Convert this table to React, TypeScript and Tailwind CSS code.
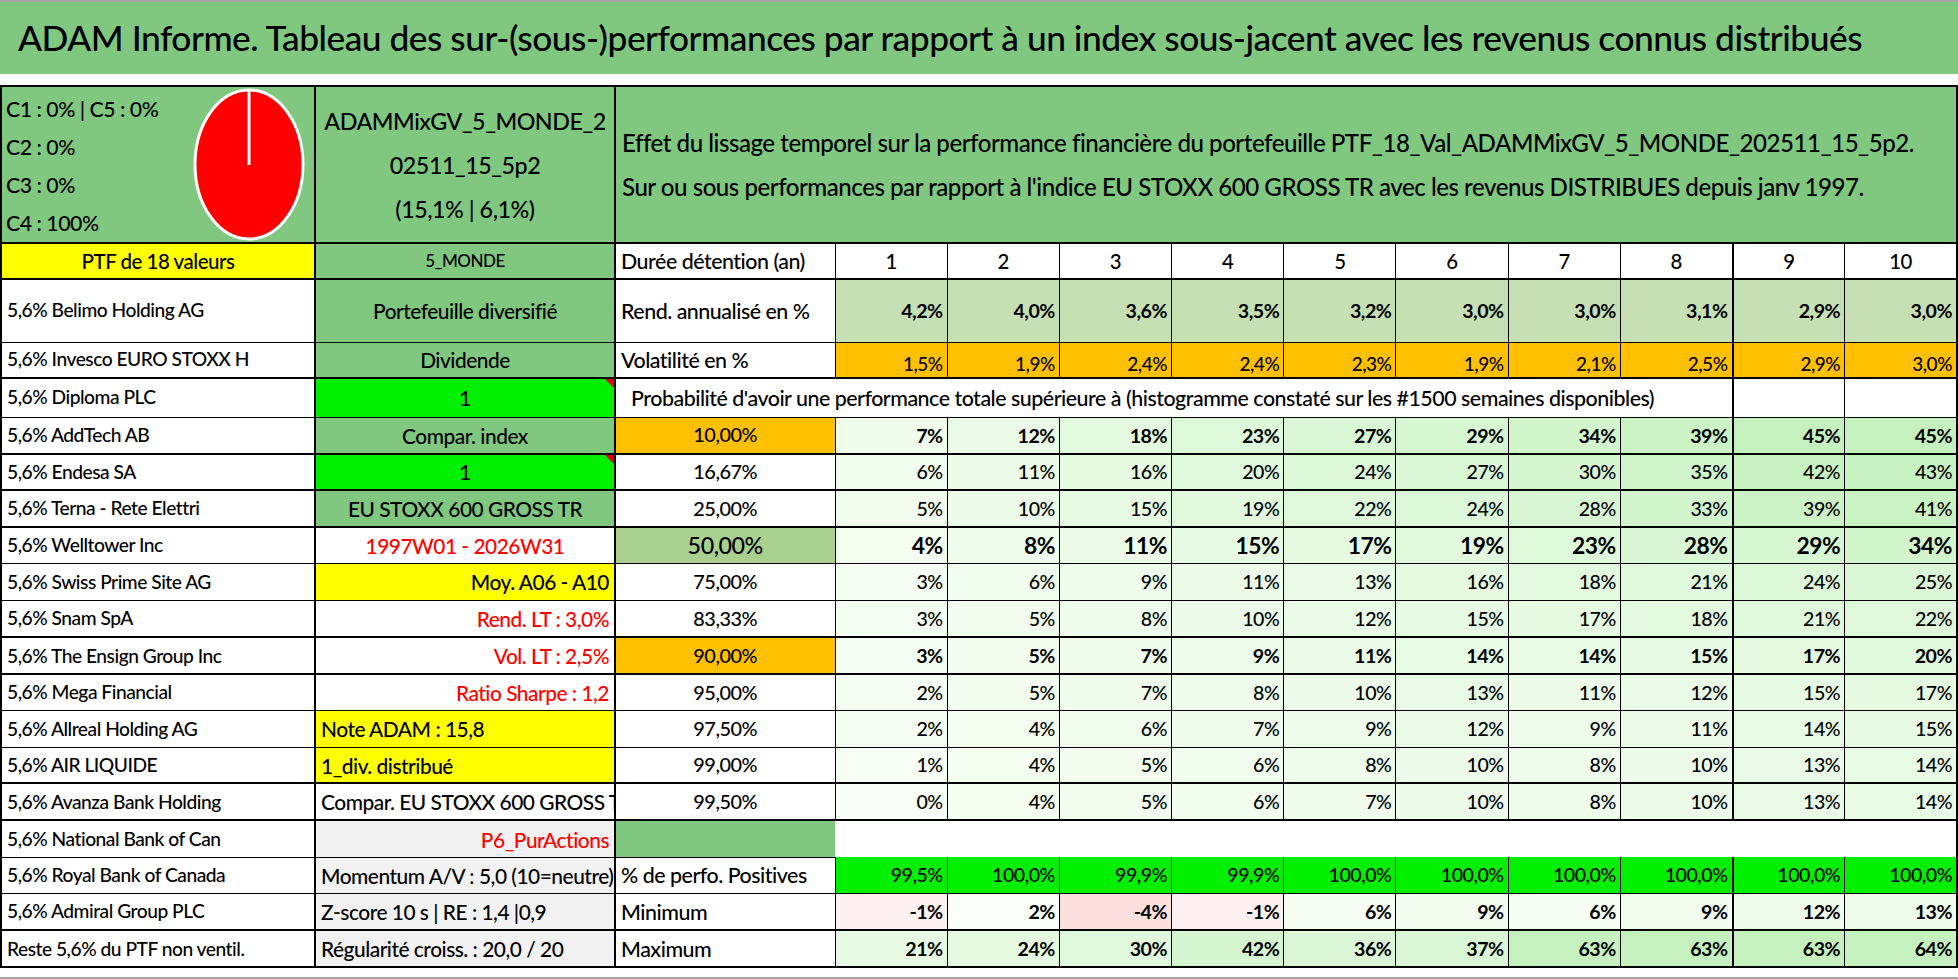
import React from 'react';

type Rgb = [number, number, number];

const mix = (a: Rgb, b: Rgb, t: number) => {
  const k = Math.max(0, Math.min(1, t));
  return `rgb(${a.map((v, i) => Math.round(v + (b[i] - v) * k)).join(',')})`;
};

const PALE: Rgb = [248, 255, 246];
const GREEN: Rgb = [196, 241, 189];
const probBg = (v: number) => mix(PALE, GREEN, v / 46);
const maxBg = (v: number) => mix(PALE, GREEN, v / 64);
const minBg = (v: number) => (v < 0 ? mix([253, 246, 246], [252, 224, 224], -v / 4) : mix([252, 255, 251], [238, 252, 235], v / 13));

const years = [1, 2, 3, 4, 5, 6, 7, 8, 9, 10];
const rend = ['4,2%', '4,0%', '3,6%', '3,5%', '3,2%', '3,0%', '3,0%', '3,1%', '2,9%', '3,0%'];
const vol = ['1,5%', '1,9%', '2,4%', '2,4%', '2,3%', '1,9%', '2,1%', '2,5%', '2,9%', '3,0%'];
const positives = ['99,5%', '100,0%', '99,9%', '99,9%', '100,0%', '100,0%', '100,0%', '100,0%', '100,0%', '100,0%'];
const minimum = [-1, 2, -4, -1, 6, 9, 6, 9, 12, 13];
const maximum = [21, 24, 30, 42, 36, 37, 63, 63, 63, 64];

type ProbRow = {
  stock: string;
  side: React.ReactNode;
  sideCls: string;
  level: string;
  levelCls: string;
  vals: number[];
  h: string;
  strong?: boolean;
  big?: boolean;
  thick?: boolean;
  marker?: boolean;
};

const probRows: ProbRow[] = [
  { stock: '5,6% AddTech AB', side: 'Compar. index', sideCls: 'bg-[#80c880] text-center', level: '10,00%', levelCls: 'bg-[#ffc000]', vals: [7, 12, 18, 23, 27, 29, 34, 39, 45, 45], h: 'h-[37px]', strong: true, thick: true },
  { stock: '5,6% Endesa SA', side: '1', sideCls: 'bg-[#00f000] text-center text-[21.4px]', level: '16,67%', levelCls: 'bg-white', vals: [6, 11, 16, 20, 24, 27, 30, 35, 42, 43], h: 'h-[36px]', thick: true, marker: true },
  { stock: '5,6% Terna - Rete Elettri', side: 'EU STOXX 600 GROSS TR', sideCls: 'bg-[#80c880] text-center text-[16.5px]', level: '25,00%', levelCls: 'bg-white', vals: [5, 10, 15, 19, 22, 24, 28, 33, 39, 41], h: 'h-[37px]', thick: true },
  { stock: '5,6% Welltower Inc', side: '1997W01 - 2026W31', sideCls: 'bg-white text-center text-[19.2px] text-[#ff0000]', level: '50,00%', levelCls: 'bg-[#a9d08e] text-[23.3px]', vals: [4, 8, 11, 15, 17, 19, 23, 28, 29, 34], h: 'h-[36px]', strong: true, big: true },
  { stock: '5,6% Swiss Prime Site AG', side: 'Moy. A06 - A10', sideCls: 'bg-[#ffff00] text-right', level: '75,00%', levelCls: 'bg-white', vals: [3, 6, 9, 11, 13, 16, 18, 21, 24, 25], h: 'h-[37px]' },
  { stock: '5,6% Snam SpA', side: 'Rend. LT : 3,0%', sideCls: 'bg-white text-right text-[#ff0000]', level: '83,33%', levelCls: 'bg-white', vals: [3, 5, 8, 10, 12, 15, 17, 18, 21, 22], h: 'h-[37px]', thick: true },
  { stock: '5,6% The Ensign Group Inc', side: 'Vol. LT : 2,5%', sideCls: 'bg-white text-right text-[#ff0000]', level: '90,00%', levelCls: 'bg-[#ffc000]', vals: [3, 5, 7, 9, 11, 14, 14, 15, 17, 20], h: 'h-[37px]', strong: true, thick: true },
  { stock: '5,6% Mega Financial', side: 'Ratio Sharpe : 1,2', sideCls: 'bg-white text-right text-[#ff0000]', level: '95,00%', levelCls: 'bg-white', vals: [2, 5, 7, 8, 10, 13, 11, 12, 15, 17], h: 'h-[36px]' },
  { stock: '5,6% Allreal Holding AG', side: 'Note ADAM : 15,8', sideCls: 'bg-[#ffff00] text-left', level: '97,50%', levelCls: 'bg-white', vals: [2, 4, 6, 7, 9, 12, 9, 11, 14, 15], h: 'h-[37px]' },
  { stock: '5,6% AIR LIQUIDE', side: '1_div. distribué', sideCls: 'bg-[#ffff00] text-left', level: '99,00%', levelCls: 'bg-white', vals: [1, 4, 5, 6, 8, 10, 8, 10, 13, 14], h: 'h-[36px]', thick: true },
  { stock: '5,6% Avanza Bank Holding', side: 'Compar. EU STOXX 600 GROSS TR', sideCls: 'bg-white text-left', level: '99,50%', levelCls: 'bg-white', vals: [0, 4, 5, 6, 7, 10, 8, 10, 13, 14], h: 'h-[37px]', thick: true },
];

const td = 'border border-black px-[5px] overflow-hidden whitespace-nowrap';
const colA = `${td} text-[19.2px] text-left border-r-2`;
const colB = `${td} text-[20.9px] border-r-2`;
const colC = `${td} text-[21.4px] text-left`;
const dCell = (i: number) => `${td} text-right pr-[4px] ${i === 7 ? 'border-r-2' : ''}`;

const CommentMark = () => (
  <span className="absolute right-0 top-0 h-0 w-0 border-l-[9px] border-l-transparent border-t-[9px] border-t-[#e00000]" />
);

const Pie = () => (
  <svg width="112" height="153" viewBox="0 0 112 153" className="shrink-0">
    <ellipse cx="56" cy="76.5" rx="54" ry="74.5" fill="#ff0000" stroke="#ffffff" strokeWidth="3" />
    <line x1="56" y1="2" x2="56" y2="77" stroke="#ffffff" strokeWidth="3" />
  </svg>
);

export default function App() {
  return (
    <div className="flex h-[979px] w-[1958px] flex-col overflow-hidden bg-white font-medium tracking-[-0.03em] text-black [font-family:Lato,'Open_Sans',sans-serif]">
      <div className="flex h-[74px] shrink-0 items-center border-t-2 border-[#a6a6a6] bg-[#80c880] pl-[18px] text-[35.3px] whitespace-nowrap">
        ADAM Informe. Tableau des sur-(sous-)performances par rapport à un index sous-jacent avec les revenus connus distribués
      </div>
      <div className="h-[11px] shrink-0" />

      <table className="w-full shrink-0 table-fixed border-collapse border-2 border-black">
        <colgroup>
          <col className="w-[314px]" />
          <col className="w-[300px]" />
          <col className="w-[220px]" />
          {years.map(y => <col key={y} />)}
        </colgroup>
        <tbody>
          {/* Bloc d'en-tête */}
          <tr className="h-[156px]">
            <td className="overflow-hidden border border-r-2 border-black bg-[#80c880] p-0 align-top">
              <div className="flex pt-[1px]">
                <div className="w-[191px] pl-[4px] pt-[2px] text-[21.3px] leading-[38px] whitespace-nowrap">
                  <div>C1 : 0% | C5 : 0%</div>
                  <div>C2 : 0%</div>
                  <div>C3 : 0%</div>
                  <div>C4 : 100%</div>
                </div>
                <Pie />
              </div>
            </td>
            <td className={`${td} border-r-2 bg-[#80c880] text-center text-[23.3px] leading-[44px]`}>
              <div>ADAMMixGV_5_MONDE_2</div>
              <div>02511_15_5p2</div>
              <div>(15,1% | 6,1%)</div>
            </td>
            <td colSpan={11} className={`${td} bg-[#80c880] pl-[6px] text-[24.1px] leading-[44px]`}>
              <div>Effet du lissage temporel sur la performance financière du portefeuille PTF_18_Val_ADAMMixGV_5_MONDE_202511_15_5p2.</div>
              <div>Sur ou sous performances par rapport à l'indice EU STOXX 600 GROSS TR avec les revenus DISTRIBUES depuis janv 1997.</div>
            </td>
          </tr>

          <tr className="h-[36px]">
            <td className={`${td} border-r-2 border-b-2 border-t-2 bg-[#ffff00] text-center text-[20.5px]`}>PTF de 18 valeurs</td>
            <td className={`${td} border-r-2 border-b-2 border-t-2 bg-[#80c880] text-center text-[17px]`}>5_MONDE</td>
            <td className={`${colC} border-b-2 border-t-2`}>Durée détention (an)</td>
            {years.map((y, i) => (
              <td key={y} className={`${td} border-b-2 border-t-2 text-center text-[20.4px] ${i === 7 ? 'border-r-2' : ''}`}>{y}</td>
            ))}
          </tr>

          <tr className="h-[63px]">
            <td className={colA}>5,6% Belimo Holding AG</td>
            <td className={`${colB} bg-[#80c880] text-center`}>Portefeuille diversifié</td>
            <td className={colC}>Rend. annualisé en %</td>
            {rend.map((v, i) => (
              <td key={i} className={`${dCell(i)} bg-[#c6e0b4] text-[19.6px] font-bold`}>{v}</td>
            ))}
          </tr>

          <tr className="h-[36px]">
            <td className={`${colA} border-b-2`}>5,6% Invesco EURO STOXX H</td>
            <td className={`${colB} border-b-2 bg-[#80c880] text-center`}>Dividende</td>
            <td className={`${colC} border-b-2`}>Volatilité en %</td>
            {vol.map((v, i) => (
              <td key={i} className={`${dCell(i)} border-b-2 bg-[#ffc000] pb-0 align-bottom text-[19px] leading-[27px]`}>{v}</td>
            ))}
          </tr>

          <tr className="h-[39px]">
            <td className={colA}>5,6% Diploma PLC</td>
            <td className={`${colB} relative bg-[#00f000] text-center text-[21.4px]`}>
              1
              <CommentMark />
            </td>
            <td colSpan={9} className={`${td} border-r-2 pl-[15px] text-left text-[21.4px]`}>
              Probabilité d'avoir une performance totale supérieure à (histogramme constaté sur les #1500 semaines disponibles)
            </td>
            <td className={td} />
            <td className={td} />
          </tr>

          {probRows.map(r => (
            <tr key={r.stock} className={r.h}>
              <td className={`${colA} ${r.thick ? 'border-b-2' : ''}`}>{r.stock}</td>
              <td className={`${colB} ${r.sideCls} ${r.thick ? 'border-b-2' : ''} ${r.marker ? 'relative' : ''}`}>
                {r.side}
                {r.marker && <CommentMark />}
              </td>
              <td className={`${td} text-center text-[19.9px] ${r.levelCls} ${r.thick ? 'border-b-2' : ''}`}>{r.level}</td>
              {r.vals.map((v, i) => (
                <td
                  key={i}
                  className={`${dCell(i)} ${r.thick ? 'border-b-2' : ''} ${r.strong ? 'font-bold' : ''} ${r.big ? 'text-[22.8px]' : 'text-[19.6px]'}`}
                  style={{ backgroundColor: probBg(v) }}
                >
                  {v}%
                </td>
              ))}
            </tr>
          ))}

          <tr className="h-[37px]">
            <td className={colA}>5,6% National Bank of Can</td>
            <td className={`${colB} bg-[#f2f2f2] text-right text-[#ff0000]`}>P6_PurActions</td>
            <td className={`${td} border-r-0 bg-[#80c880]`} />
            <td colSpan={10} className="border-t-2 border-black bg-white" />
          </tr>

          <tr className="h-[36px]">
            <td className={colA}>5,6% Royal Bank of Canada</td>
            <td className={`${colB} bg-[#f2f2f2] text-left text-[18.9px]`}>Momentum A/V : 5,0 (10=neutre)</td>
            <td className={`${colC} text-[21.2px]`}>% de perfo. Positives</td>
            {positives.map((v, i) => (
              <td key={i} className={`${dCell(i)} border-t-0 bg-[#00f000] text-[19.6px]`}>{v}</td>
            ))}
          </tr>

          <tr className="h-[37px]">
            <td className={`${colA} border-b-2`}>5,6% Admiral Group PLC</td>
            <td className={`${colB} border-b-2 bg-[#f2f2f2] text-left text-[19.1px]`}>Z-score 10 s | RE : 1,4 |0,9</td>
            <td className={`${colC} border-b-2`}>Minimum</td>
            {minimum.map((v, i) => (
              <td key={i} className={`${dCell(i)} border-b-2 text-[19.6px] font-bold`} style={{ backgroundColor: minBg(v) }}>{v}%</td>
            ))}
          </tr>

          <tr className="h-[37px]">
            <td className={colA}>Reste 5,6% du PTF non ventil.</td>
            <td className={`${colB} bg-[#f2f2f2] text-left text-[19.1px]`}>Régularité croiss. : 20,0 / 20</td>
            <td className={colC}>Maximum</td>
            {maximum.map((v, i) => (
              <td key={i} className={`${dCell(i)} text-[19.6px] font-bold`} style={{ backgroundColor: maxBg(v) }}>{v}%</td>
            ))}
          </tr>
        </tbody>
      </table>

      <div className="flex-1" />
      <div className="h-[2px] shrink-0 bg-[#a6a6a6]" />
    </div>
  );
}
